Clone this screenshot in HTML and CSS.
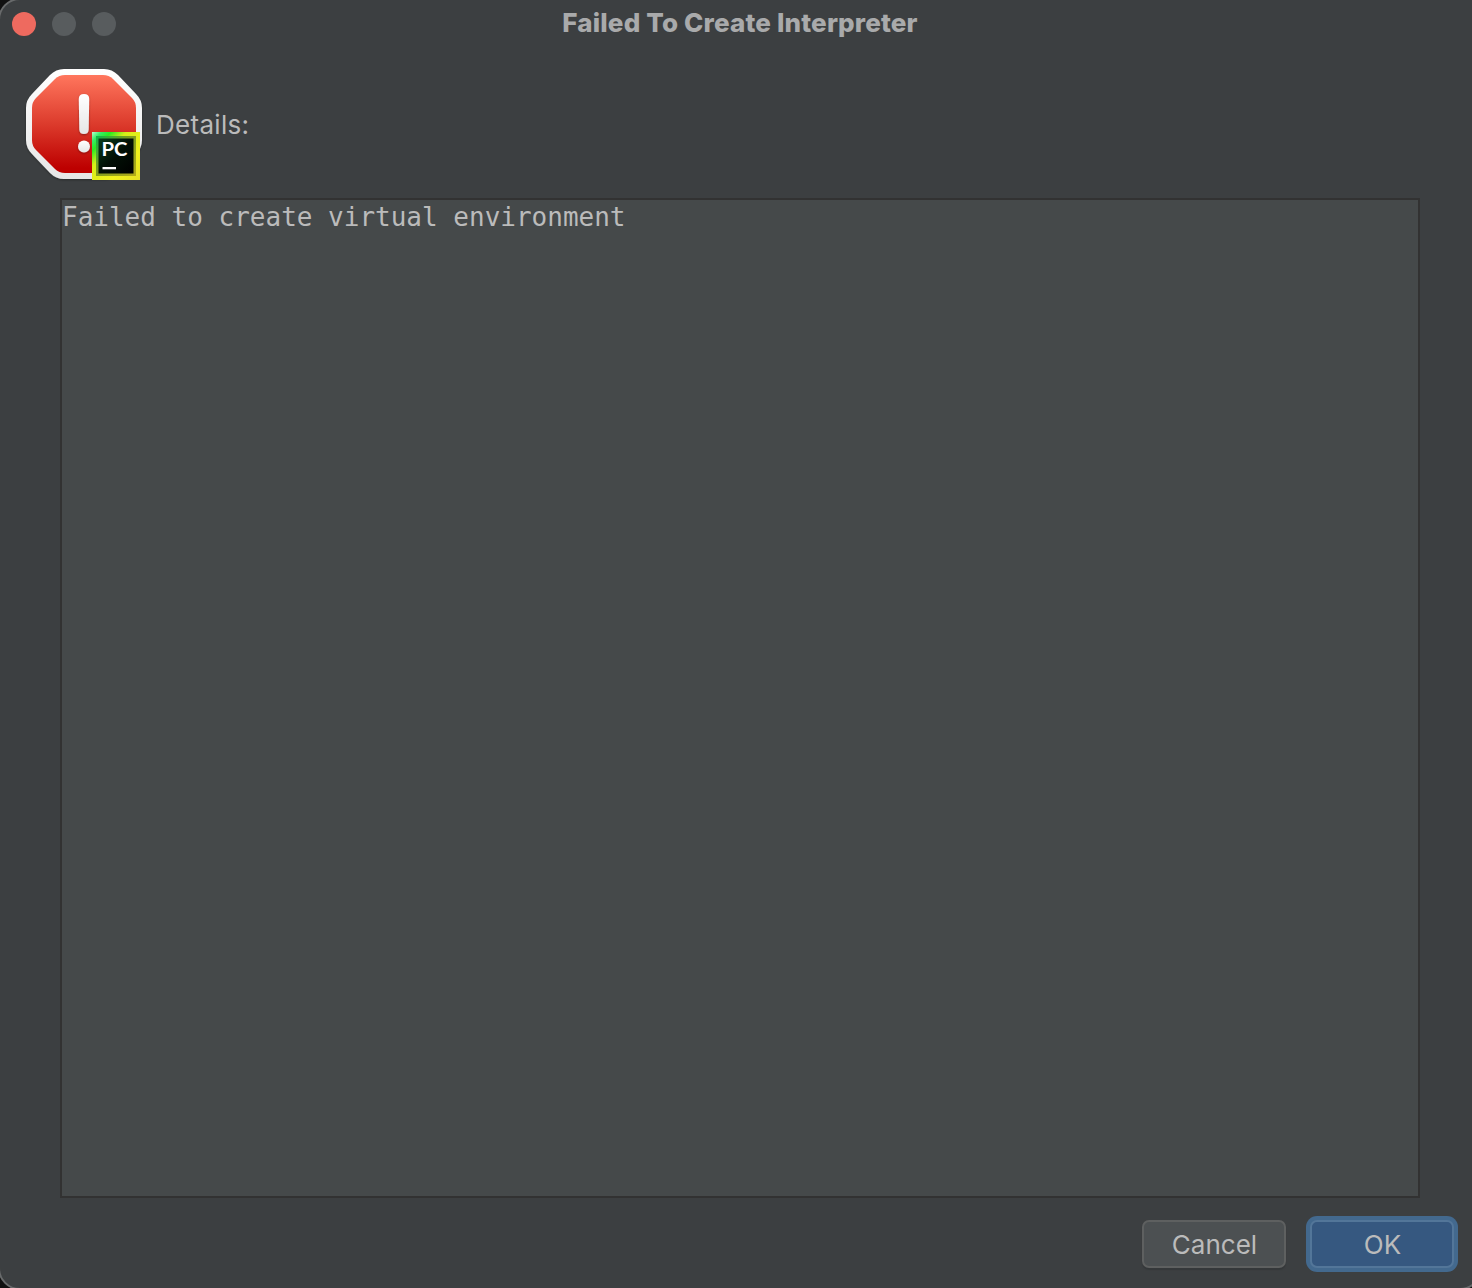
FILE: index.html
```html
<!DOCTYPE html>
<html lang="en">
<head>
<meta charset="utf-8">
<title>Failed To Create Interpreter</title>
<link rel="stylesheet" href="styles.css">
</head>
<body>
<main class="dialog">
  <header class="titlebar">
    <div class="lights"><span class="light close"></span><span class="light"></span><span class="light"></span></div>
    <h1 class="title">Failed To Create Interpreter</h1>
  </header>
  <section class="message">
    <svg class="alert" width="124" height="124" viewBox="22 62 124 124" aria-hidden="true">
      <defs>
        <linearGradient id="red" x1="0" y1="0" x2="0" y2="1"><stop offset="0" stop-color="#ff765d"/><stop offset=".5" stop-color="#dc3b2c"/><stop offset=".95" stop-color="#bd0000"/></linearGradient>
        <linearGradient id="white" x1="0" y1="0" x2="0" y2="1"><stop offset="0" stop-color="#fff"/><stop offset="1" stop-color="#e6e6e6"/></linearGradient>
        <linearGradient id="frame" x1="0" y1="0" x2="1" y2="1"><stop offset="0" stop-color="#b8ffd0"/><stop offset=".1" stop-color="#35ed66"/><stop offset=".2" stop-color="#2bea21"/><stop offset=".36" stop-color="#d6ef18"/><stop offset=".7" stop-color="#f0f01c"/><stop offset="1" stop-color="#e6df25"/></linearGradient>
        <linearGradient id="inner" x1="0" y1="0" x2="1" y2="1"><stop offset="0" stop-color="#09b94b"/><stop offset=".4" stop-color="#789c20"/><stop offset="1" stop-color="#b5ac19"/></linearGradient>
        <linearGradient id="dark" x1="0" y1="0" x2="1" y2="1"><stop offset="0" stop-color="#073d1c"/><stop offset=".5" stop-color="#021006"/><stop offset="1" stop-color="#000"/></linearGradient>
        <filter id="shadow" x="-20%" y="-20%" width="140%" height="150%"><feDropShadow dx="0" dy="1" stdDeviation="1" flood-opacity=".35"/></filter>
      </defs>
      <path filter="url(#shadow)" fill="url(#white)" d="M64 69H104Q112 69 118 75L136 94Q142 100 142 108V140Q142 148 136 154L118 173Q112 179 104 179H64Q56 179 50 173L32 154Q26 148 26 140V108Q26 100 32 94L50 75Q56 69 64 69Z"/>
      <path fill="url(#red)" d="M65 75H103Q109 75 113 79L132 98Q136 102 136 108V140Q136 146 132 150L113 169Q109 173 103 173H65Q59 173 55 169L36 150Q32 146 32 140V108Q32 102 36 98L55 79Q59 75 65 75Z"/>
      <g filter="url(#shadow)" fill="url(#white)"><path d="M78.800 99Q78.800 94 84 94T89.200 99L88.700 129.500Q88.500 134 84 134T79.300 129.500Z"/><circle cx="84" cy="146.500" r="6"/></g>
      <path fill="url(#frame)" d="M92 132h48v48H92z"/>
      <path fill="url(#inner)" d="M96 136h40v40H96z"/>
      <path fill="url(#dark)" d="M98.500 138.500h35v35h-35z"/>
      <text class="badge" x="101.500" y="156.300" textLength="26" lengthAdjust="spacingAndGlyphs">PC</text>
      <path fill="#fff" d="M102.500 167h13.500v2.300h-13.500z"/>
    </svg>
    <span class="label">Details:</span>
  </section>
  <pre class="details">Failed to create virtual environment</pre>
  <footer class="actions">
    <button class="button cancel">Cancel</button>
    <button class="button ok">OK</button>
  </footer>
</main>
</body>
</html>
```
FILE: styles.css
```css
* { box-sizing: border-box; }
html { background: #111; }
body { margin: 0; width: 1472px; height: 1288px; overflow: hidden; display: flex; align-items: flex-start; }
.dialog {
  flex: none; margin: -2px 0 0 -2px;
  width: 1484px; height: 1292px; display: flex; flex-direction: column;
  background: #3c3f41; border: 2px solid #686a6b; border-radius: 22px 8px 22px 22px;
  font-family: Inter, sans-serif; color: #bbb;
}
.titlebar { display: grid; grid-template-columns: 140px 1fr 140px; height: 62px; }
.lights { display: flex; gap: 16px; padding: 12px; }
.light { width: 24px; height: 24px; border-radius: 50%; background: #585c5e; }
.close { background: #ee6a5f; }
.title { margin: 0; padding-top: 7px; text-align: center; font-size: 26px; line-height: 32px; font-weight: 800; letter-spacing: .17px; color: #a9aaab; white-space: nowrap; }
.message { display: flex; align-items: center; height: 124px; padding-left: 22px; gap: 10px; }
.alert { flex: none; }
.badge { font: 700 19.5px Lato, sans-serif; fill: #fff; }
.label { font-size: 26px; line-height: 32px; letter-spacing: .3px; padding-top: 2px; }
.details {
  margin: 12px 60px 0; height: 1000px; padding: 1px 0 0;
  border: 2px solid #323232; background: #45494a;
  font: 26px/32px "DejaVu Sans Mono", monospace; color: #bbb;
}
.actions { display: flex; justify-content: flex-end; gap: 24px; padding: 22px 26px 0 0; }
.button {
  width: 144px; height: 48px; padding: 2px 0 0 1px; border: 2px solid #5e6060; border-radius: 7px;
  background: #4c5052; color: #bbb; font: 26px/32px Inter, sans-serif;
}
.cancel { box-shadow: 0 2px 1px #35383a; }
.ok { border-color: #537699; background: #365880; box-shadow: 0 0 0 4px #43698e; }
```
